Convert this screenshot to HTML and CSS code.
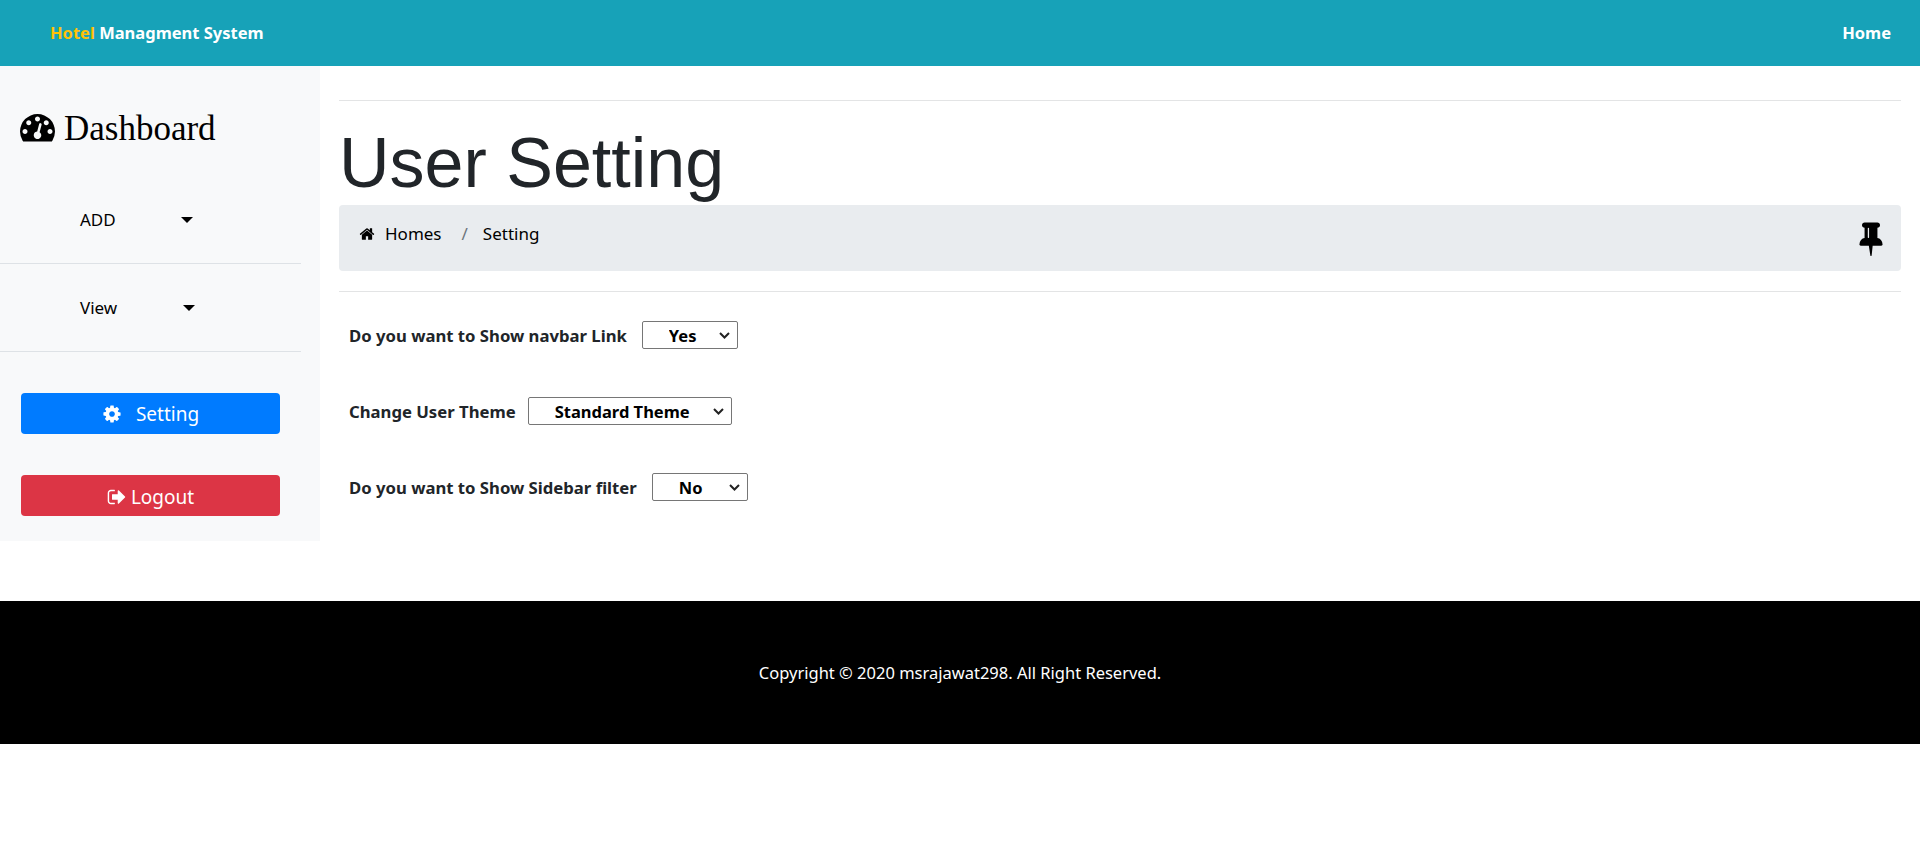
FILE: index.html
```html
<!DOCTYPE html>
<html>
<head>
  <meta charset="UTF-8">
  <title>User Setting</title>
  <link rel="stylesheet" href="styles.css">
</head>
<body>
  <nav class="navbar">
    <a class="brand" href="#"><span class="brand-accent">Hotel</span> Managment System</a>
    <a class="nav-link" href="#">Home</a>
  </nav>

  <div class="page">
    <aside class="sidebar">
      <h3 class="side-title">
        <svg class="icon-dash" viewBox="0 0 1792 1792"><path d="M384 1152q0-53-37.5-90.5t-90.5-37.5-90.5 37.5-37.5 90.5 37.5 90.5 90.5 37.5 90.5-37.5 37.5-90.5zm192-448q0-53-37.5-90.5t-90.5-37.5-90.5 37.5-37.5 90.5 37.5 90.5 90.5 37.5 90.5-37.5 37.5-90.5zm428 481l101-382q6-26-7.5-48.5t-38.5-29.5-48 6.5-30 39.5l-101 382q-60 5-107 43.5t-63 98.5q-20 77 20 146t117 89 146-20 89-117q16-60-6-117t-72-91zm660-33q0-53-37.5-90.5t-90.5-37.5-90.5 37.5-37.5 90.5 37.5 90.5 90.5 37.5 90.5-37.5 37.5-90.5zm-640-640q0-53-37.5-90.5t-90.5-37.5-90.5 37.5-37.5 90.5 37.5 90.5 90.5 37.5 90.5-37.5 37.5-90.5zm448 192q0-53-37.5-90.5t-90.5-37.5-90.5 37.5-37.5 90.5 37.5 90.5 90.5 37.5 90.5-37.5 37.5-90.5zm320 448q0 261-141 483-19 29-54 29h-1402q-35 0-54-29-141-221-141-483 0-182 71-348t191-286 286-191 348-71 348 71 286 191 191 286 71 348z"/></svg>
        Dashboard
      </h3>

      <div class="side-menu side-menu-add">
        <span class="menu-label">ADD</span>
        <span class="caret"></span>
      </div>
      <div class="side-menu side-menu-view">
        <span class="menu-label">View</span>
        <span class="caret"></span>
      </div>

      <a class="btn btn-blue" href="#">
        <svg class="icon-cog" viewBox="0 0 1792 1792"><path d="M1152 896q0-106-75-181t-181-75-181 75-75 181 75 181 181 75 181-75 75-181zm512-109v222q0 12-8 23t-20 13l-185 28q-19 54-39 91 35 50 107 138 10 12 10 25t-9 23q-27 37-99 108t-94 71q-12 0-26-9l-138-108q-44 23-91 38-16 136-29 186-7 28-36 28h-222q-14 0-24.5-8.5t-11.5-21.5l-28-184q-49-16-90-37l-141 107q-10 9-25 9-14 0-25-11-126-114-165-168-7-10-7-23 0-12 8-23 15-21 51-66.5t54-70.5q-27-50-41-99l-183-27q-13-2-21-12.5t-8-23.5v-222q0-12 8-23t19-13l186-28q14-46 39-92-40-57-107-138-10-12-10-24 0-10 9-23 26-36 98.5-107.5t94.5-71.5q13 0 26 10l138 107q44-23 91-38 16-136 29-186 7-28 36-28h222q14 0 24.5 8.5t11.5 21.5l28 184q49 16 90 37l142-107q9-9 24-9 13 0 25 10 129 119 165 170 7 8 7 22 0 12-8 23-15 21-51 66.5t-54 70.5q26 50 41 98l183 28q13 2 21 12.5t8 23.5z"/></svg>
        Setting
      </a>
      <a class="btn btn-red" href="#">
        <svg class="icon-out" viewBox="0 0 1792 1792"><path d="M704 1440q0 4 1 20t.5 26.5-3 23.5-10 19.5-20.5 6.5h-320q-119 0-203.5-84.5t-84.5-203.5v-704q0-119 84.5-203.5t203.5-84.5h320q13 0 22.5 9.5t9.5 22.5q0 4 1 20t.5 26.5-3 23.5-10 19.5-20.5 6.5h-320q-66 0-113 47t-47 113v704q0 66 47 113t113 47h312l11.5 1 11.5 3 8 5.5 7 9 2 13.5zm928-544q0 26-19 45l-544 544q-19 19-45 19t-45-19-19-45v-288h-448q-26 0-45-19t-19-45v-384q0-26 19-45t45-19h448v-288q0-26 19-45t45-19 45 19l544 544q19 19 19 45z"/></svg>
        Logout
      </a>
    </aside>

    <main class="content">
      <hr class="rule">
      <h1 class="page-title">User Setting</h1>
      <div class="breadcrumb">
        <svg class="icon-home" viewBox="0 0 1792 1792"><path d="M1472 992v480q0 26-19 45t-45 19h-384v-384h-256v384h-384q-26 0-45-19t-19-45v-480q0-1 .5-3t.5-3l575-474 575 474q1 2 1 6zm223-69l-62 74q-8 9-21 11h-3q-13 0-21-7l-692-577-692 577q-12 8-24 7-13-2-21-11l-62-74q-8-10-7-23.5t11-21.5l719-599q32-26 76-26t76 26l244 204v-195q0-14 9-23t23-9h192q14 0 23 9t9 23v408l219 182q10 8 11 21.5t-7 23.5z"/></svg>
        <a class="crumb" href="#">Homes</a>
        <span class="crumb-sep">/</span>
        <span class="crumb">Setting</span>
        <svg class="icon-pin" viewBox="0 0 1792 1792"><path d="M800 864v-448q0-14-9-23t-23-9-23 9-9 23v448q0 14 9 23t23 9 23-9 9-23zm672 352q0 26-19 45t-45 19h-429l-51 483q-2 12-10.5 20.5t-20.5 8.5h-1q-27 0-32-27l-76-485h-404q-26 0-45-19t-19-45q0-123 78.5-221.5t177.5-98.5v-512q-52 0-90-38t-38-90 38-90 90-38h640q52 0 90 38t38 90-38 90-90 38v512q99 0 177.5 98.5t78.5 221.5z"/></svg>
      </div>
      <hr class="rule rule-low">

      <form class="settings">
        <div class="setting-row">
          <label for="navbarLink">Do you want to Show navbar Link</label>
          <select id="navbarLink" class="select-short"><option>Yes</option><option>No</option></select>
        </div>
        <div class="setting-row setting-row-theme">
          <label for="userTheme">Change User Theme</label>
          <select id="userTheme" class="select-wide"><option>Standard Theme</option><option>Dark Theme</option></select>
        </div>
        <div class="setting-row">
          <label for="sidebarFilter">Do you want to Show Sidebar filter</label>
          <select id="sidebarFilter" class="select-short"><option>No</option><option>Yes</option></select>
        </div>
      </form>
    </main>
  </div>

  <footer class="footer">Copyright © 2020 msrajawat298. All Right Reserved.</footer>
</body>
</html>
```

FILE: styles.css
```css
* {
  box-sizing: border-box;
}

body {
  margin: 0;
  font-family: "Noto Sans", "Open Sans", sans-serif;
  font-size: 16.5px;
  line-height: 24px;
  color: #212529;
  background: white;
}

a {
  text-decoration: none;
  color: inherit;
}

.navbar {
  height: 66px;
  background: #17a2b8;
  display: flex;
  align-items: center;
  justify-content: space-between;
  padding: 0 29px 0 50px;
  color: white;
  font-size: 16.5px;
  font-weight: 700;
}

.brand-accent {
  color: #ffc107;
}

.page {
  display: flex;
  height: 535px;
}

.sidebar {
  width: 320px;
  height: 475px;
  background: #f8f9fa;
  flex-shrink: 0;
  padding-top: 43px;
}

.side-title {
  display: flex;
  align-items: center;
  gap: 9px;
  margin: 0 0 0 20px;
  height: 40px;
  font-family: "Liberation Serif", serif;
  font-size: 35px;
  font-weight: normal;
  color: black;
}

.icon-dash {
  width: 35px;
  height: 35px;
  margin-top: -6px;
}

.side-menu {
  width: 301px;
  height: 88px;
  border-bottom: 1px solid #dee2e6;
  display: flex;
  align-items: center;
  color: black;
  font-size: 17px;
  padding-left: 80px;
}

.side-menu-add {
  margin-top: 27px;
}

.menu-label {
  width: 100px;
  padding-top: 1px;
}

.caret {
  width: 0;
  height: 0;
  border-top: 6px solid black;
  border-left: 6px solid transparent;
  border-right: 6px solid transparent;
}

.side-menu-add .caret {
  margin-left: 1px;
}

.side-menu-view .caret {
  margin-left: 3px;
}

.btn {
  display: flex;
  align-items: center;
  justify-content: center;
  width: 259px;
  margin-left: 21px;
  border-radius: 4px;
  color: white;
  font-size: 19px;
}

.btn-blue {
  height: 41px;
  margin-top: 41px;
  background: #007bff;
  gap: 14px;
}

.btn-red {
  height: 41px;
  margin-top: 41px;
  padding-top: 2px;
  background: #dc3545;
  gap: 4px;
}

.btn svg {
  fill: white;
}

.icon-cog {
  width: 20px;
  height: 20px;
}

.icon-out {
  width: 20px;
  height: 20px;
}

.content {
  flex: 1;
  padding: 34px 19px 0;
}

.rule {
  margin: 0;
  border: 0;
  border-top: 1px solid #e3e4e5;
}

.page-title {
  margin: 0;
  height: 104px;
  font-family: "Liberation Sans", Arial, sans-serif;
  font-size: 70px;
  font-weight: normal;
  line-height: 124px;
}

.breadcrumb {
  height: 66px;
  background: #e9ecef;
  border-radius: 4px;
  display: flex;
  align-items: center;
  padding: 0 19px 8px 20px;
  color: black;
  font-size: 17px;
}

.icon-home {
  width: 16px;
  height: 16px;
  margin-right: 10px;
}

.crumb-sep {
  color: #6c757d;
  margin: 0 15px 0 20px;
}

.icon-pin {
  width: 36px;
  height: 36px;
  margin-left: auto;
  margin-right: -7px;
  margin-top: 8px;
}

.rule-low {
  margin-top: 20px;
}

.settings {
  padding: 29px 10px 0;
}

.setting-row {
  display: flex;
  align-items: center;
  gap: 15px;
  height: 28px;
  margin-bottom: 48px;
  font-size: 16.7px;
  font-weight: 700;
  color: #212529;
}

.setting-row-theme {
  gap: 12px;
}

.setting-row label {
  padding-top: 2px;
}

select {
  appearance: none;
  height: 28px;
  padding: 0 0 0 26px;
  background: white url("data:image/svg+xml,%3Csvg xmlns='http://www.w3.org/2000/svg' width='11' height='7' viewBox='0 0 11 7'%3E%3Cpath d='M1 1l4.5 4.5L10 1' fill='none' stroke='%23222' stroke-width='2'/%3E%3C/svg%3E") no-repeat right 7px center;
  border: 1px solid #767676;
  border-radius: 2px;
  font-family: inherit;
  font-size: 16.5px;
  font-weight: 700;
  color: black;
}

.select-short {
  width: 96px;
}

.select-wide {
  width: 204px;
}

.footer {
  height: 143px;
  background: black;
  color: white;
  display: flex;
  align-items: center;
  justify-content: center;
}
```
